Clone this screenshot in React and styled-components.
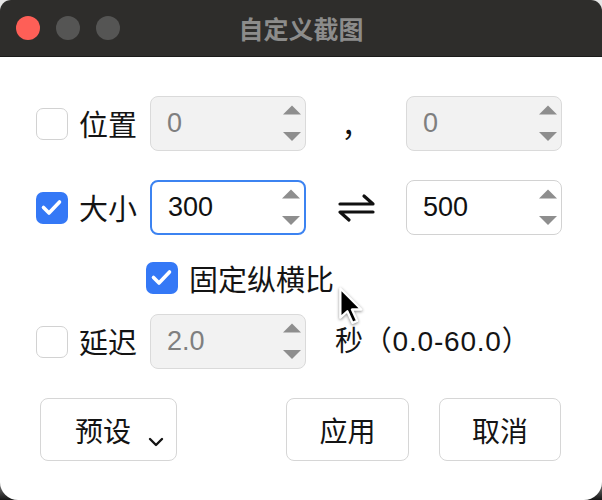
import React from 'react';
import styled, { createGlobalStyle } from 'styled-components';

const Global = createGlobalStyle`
  html, body { margin: 0; padding: 0; }
  body {
    background: linear-gradient(to bottom, #e6e6e6 0%, #e6e6e6 93%, #161616 100%);
    font-family: "Liberation Sans", "Noto Sans CJK SC", sans-serif;
  }
  #root { width: 602px; height: 500px; }
`;

const Window = styled.div`
  position: relative;
  width: 602px;
  height: 500px;
  box-sizing: border-box;
  display: flex;
  flex-direction: column;
  background: #ffffff;
  border-radius: 11px 11px 18px 18px;
  overflow: hidden;
`;

const TitleBar = styled.div`
  flex: none;
  height: 56px;
  background: #2e2d2b;
  border-bottom: 1px solid #1b1b1a;
  display: grid;
  grid-template-columns: 1fr auto 1fr;
  align-items: center;
  padding: 0 16px;
`;

const Lights = styled.div`
  display: flex;
  gap: 16px;
`;

const Light = styled.span`
  width: 24px;
  height: 24px;
  border-radius: 50%;
  background: ${p => p.$color};
`;

const Title = styled.div`
  font-family: "Noto Sans CJK SC", sans-serif;
  font-weight: 700;
  font-size: 25px;
  line-height: 1;
  color: #8c8c8b;
`;

const Body = styled.div`
  flex: 1;
  display: flex;
  flex-direction: column;
  padding: 39px 41px 0 36px;
`;

const Row = styled.div`
  display: flex;
  align-items: center;
  height: ${p => p.$h || 55}px;
  margin-top: ${p => p.$mt || 0}px;
  padding-left: ${p => p.$indent || 0}px;
`;

const Box = styled.span`
  flex: none;
  width: 32px;
  height: 32px;
  box-sizing: border-box;
  border-radius: 7px;
  border: ${p => (p.$checked ? 'none' : '1.5px solid #d2d2d2')};
  background: ${p => (p.$checked ? '#3478f6' : '#ffffff')};
  display: flex;
  align-items: center;
  justify-content: center;
`;

const Label = styled.span`
  font-family: "Noto Sans CJK SC", sans-serif;
  font-size: 29px;
  line-height: 1;
  color: #141414;
  margin-left: ${p => p.$ml ?? 11}px;
  width: ${p => (p.$w ? `${p.$w}px` : 'auto')};
  white-space: nowrap;
`;

const SpinBox = styled.div`
  flex: none;
  width: 156px;
  height: 55px;
  box-sizing: border-box;
  margin-left: ${p => p.$ml || 0}px;
  border-radius: 8px;
  border: ${p => (p.$focused ? '2px solid #3c83f1' : p.$disabled ? '1.5px solid #dadada' : '1.5px solid #d2d2d2')};
  background: ${p => (p.$disabled ? '#f2f2f2' : '#ffffff')};
  display: flex;
  align-items: center;
  padding: 0 3px 0 16px;
`;

const Value = styled.span`
  flex: 1;
  font-family: "Liberation Sans", sans-serif;
  font-size: 27px;
  line-height: 1;
  color: ${p => (p.$disabled ? '#7f7f7f' : '#111111')};
`;

const Middle = styled.span`
  flex: none;
  width: 100px;
  display: flex;
  justify-content: center;
  font-family: "Noto Sans CJK SC", sans-serif;
  font-size: 29px;
  color: #111;
`;

const Suffix = styled.span`
  margin-left: 29px;
  font-family: "Liberation Sans", "Noto Sans CJK SC", sans-serif;
  font-size: 28px;
  letter-spacing: 0.8px;
  line-height: 1;
  color: #141414;
  white-space: nowrap;
`;

const ButtonRow = styled.div`
  display: flex;
  align-items: center;
  margin-top: 29px;
  padding-left: 4px;
`;

const Button = styled.button`
  height: 63px;
  width: ${p => p.$w}px;
  margin-left: ${p => p.$ml || 0}px;
  box-sizing: border-box;
  border: 1.5px solid #d6d6d6;
  border-radius: 8px;
  background: #fff;
  display: flex;
  align-items: center;
  justify-content: center;
  gap: 17px;
  padding: ${p => (p.$menu ? '0 0 0 22px' : '0')};
  font-family: "Noto Sans CJK SC", sans-serif;
  font-size: 28px;
  color: #141414;
`;

const Chevron = styled.svg`
  margin-top: 24px;
`;

const Spacer = styled.div`
  flex: 1;
`;

const Cursor = styled.svg`
  position: absolute;
  left: 338px;
  top: 286px;
  filter: drop-shadow(0 1px 1.5px rgba(0,0,0,0.45));
`;

const Check = () => (
  <svg width="32" height="32" viewBox="0 0 32 32">
    <path d="M7.5 15.5 L13 21 L23.5 10" fill="none" stroke="#fff" strokeWidth="3.6" strokeLinecap="round" strokeLinejoin="round" />
  </svg>
);

const Checkbox = ({ checked }) => <Box $checked={checked}>{checked && <Check />}</Box>;

const Arrows = () => (
  <svg width="20" height="37" viewBox="0 0 20 37">
    <polygon points="1,9.5 10,0.5 19,9.5" fill="#8e8e8e" />
    <polygon points="1,27 10,36 19,27" fill="#8e8e8e" />
  </svg>
);

const Spin = ({ value, disabled, focused, ml }) => (
  <SpinBox $disabled={disabled} $focused={focused} $ml={ml}>
    <Value $disabled={disabled}>{value}</Value>
    <Arrows />
  </SpinBox>
);

const Swap = () => (
  <svg width="37" height="30" viewBox="0 0 37 30">
    <path d="M2 11 H35 L26 3" fill="none" stroke="#111" strokeWidth="3.2" strokeLinecap="round" strokeLinejoin="round" />
    <path d="M35 19 H2 L11 27" fill="none" stroke="#111" strokeWidth="3.2" strokeLinecap="round" strokeLinejoin="round" />
  </svg>
);

export default function App() {
  return (
    <>
      <Global />
      <Window>
        <TitleBar>
          <Lights>
            <Light $color="#fe5f57" />
            <Light $color="#555554" />
            <Light $color="#555554" />
          </Lights>
          <Title>自定义截图</Title>
          <span />
        </TitleBar>
        <Body>
          <Row>
            <Checkbox />
            <Label $w={58}>位置</Label>
            <Spin value="0" disabled ml={13} />
            <Middle>，</Middle>
            <Spin value="0" disabled />
          </Row>
          <Row $mt={29}>
            <Checkbox checked />
            <Label $w={58}>大小</Label>
            <Spin value="300" focused ml={13} />
            <Middle><Swap /></Middle>
            <Spin value="500" />
          </Row>
          <Row $mt={27} $h={32} $indent={110}>
            <Checkbox checked />
            <Label>固定纵横比</Label>
          </Row>
          <Row $mt={20}>
            <Checkbox />
            <Label $w={58}>延迟</Label>
            <Spin value="2.0" disabled ml={13} />
            <Suffix>秒（0.0-60.0）</Suffix>
          </Row>
          <ButtonRow>
            <Button $w={137} $menu>
              预设
              <Chevron width="16" height="10" viewBox="0 0 16 10">
                <path d="M2 2 L8 8 L14 2" fill="none" stroke="#141414" strokeWidth="2.4" strokeLinecap="round" strokeLinejoin="round" />
              </Chevron>
            </Button>
            <Spacer />
            <Button $w={123}>应用</Button>
            <Button $w={122} $ml={30}>取消</Button>
          </ButtonRow>
        </Body>
        <Cursor width="28" height="40" viewBox="0 0 24 34">
          <path d="M2 2 L2 27 L8 21.5 L12.5 31.5 L16.5 29.8 L12 20 L20 20 Z" fill="#000" stroke="#fff" strokeWidth="2" strokeLinejoin="round" />
        </Cursor>
      </Window>
    </>
  );
}
